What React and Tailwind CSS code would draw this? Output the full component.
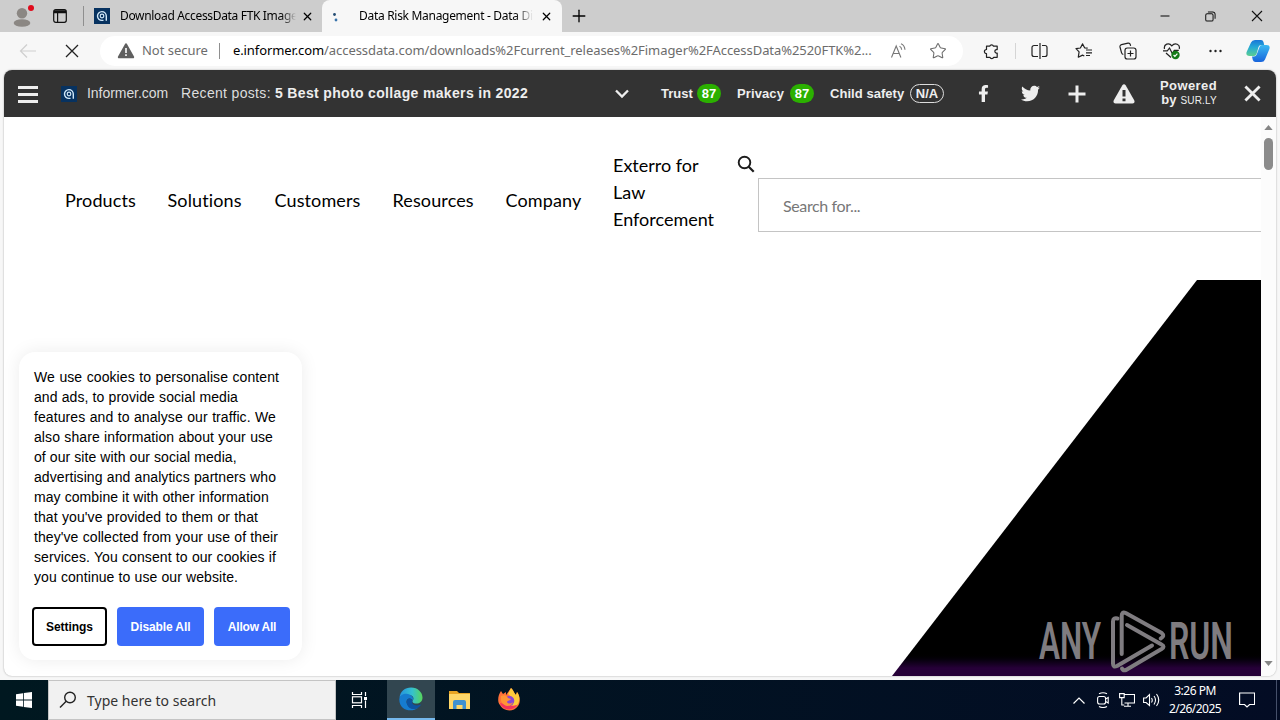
import { X, Plus, Minus, Star } from 'lucide-react';
import { FaFacebookF, FaTwitter } from 'react-icons/fa';

const menuItems = [
  { label: 'Products', width: 'w-[102.5px]' },
  { label: 'Solutions', width: 'w-[107px]' },
  { label: 'Customers', width: 'w-[118px]' },
  { label: 'Resources', width: 'w-[113px]' },
  { label: 'Company', width: 'w-[107.5px]' },
];

const cookieLines = [
  { text: 'We use cookies to personalise content', width: 245 },
  { text: 'and ads, to provide social media', width: 204 },
  { text: 'features and to analyse our traffic. We', width: 242 },
  { text: 'also share information about your use', width: 239 },
  { text: 'of our site with our social media,', width: 202 },
  { text: 'advertising and analytics partners who', width: 242 },
  { text: 'may combine it with other information', width: 233 },
  { text: "that you've provided to them or that", width: 224 },
  { text: "they've collected from your use of their", width: 244 },
  { text: 'services. You consent to our cookies if', width: 242 },
  { text: 'you continue to use our website.', width: 204 },
];

const InformerLogo = ({ className }) => (
  <svg viewBox="0 0 16 16" className={className} fill="none" stroke="#cfe6f7">
    <rect width="16" height="16" fill="#073260" stroke="none" />
    <path d="M12.300 12.800V8A4.400 4.400 0 1 0 8 12.400h1.500" strokeWidth="1.400" />
    <circle cx="8" cy="8" r="1.800" strokeWidth="1.200" />
  </svg>
);

const TabStrip = () => (
  <div className="flex h-8 items-center bg-[#cdcdcd] text-[12px] text-black">
    <svg viewBox="0 0 28 28" className="ml-2 h-7 w-7 shrink-0">
      <circle cx="14" cy="11.3" r="5.2" fill="#8b8783" />
      <ellipse cx="14" cy="21" rx="8.3" ry="3.8" fill="#8b8783" />
      <circle cx="23" cy="6" r="3" fill="#e00b1c" />
    </svg>
    <svg viewBox="0 0 14 14" className="ml-[17px] h-[14px] w-[14px] shrink-0" fill="none" stroke="#111" strokeWidth="1.2">
      <rect x="0.7" y="0.7" width="12.6" height="12.6" rx="2" />
      <path d="M1 2h12M1 3.6h12" strokeWidth="1.5" />
      <path d="M4.6 4v9" />
    </svg>
    <div className="ml-4 h-5 w-px bg-[#8f8f8f]" />
    <InformerLogo className="ml-[10px] h-4 w-4 shrink-0" />
    <div className="ml-[10px] w-[176px] whitespace-nowrap bg-linear-to-r from-black from-90% to-[#cdcdcd] bg-clip-text text-transparent tracking-[-0.33px]">
      Download AccessData FTK Image
    </div>
    <X className="ml-[5px] h-[13px] w-[13px] shrink-0" strokeWidth={2.2} />
    <div className="ml-2 flex h-8 w-[240px] shrink-0 items-center rounded-t-lg bg-[#f7f7f7]">
      <svg viewBox="0 0 16 16" className="ml-[7px] h-4 w-4 shrink-0">
        <circle cx="5.500" cy="6.500" r="1.400" fill="#234c72" />
        <circle cx="7" cy="12" r="1.400" fill="#3974ab" />
      </svg>
      <div className="ml-[14px] w-[174px] whitespace-nowrap bg-linear-to-r from-black from-88% to-[#f7f7f7] bg-clip-text text-transparent tracking-[-0.3px]">
        Data Risk Management - Data Di
      </div>
      <X className="ml-[7px] h-[13px] w-[13px] shrink-0" strokeWidth={2.2} />
    </div>
    <Plus className="ml-[7px] h-5 w-5" strokeWidth={1.6} />
    <div className="ml-auto flex items-center">
      <Minus className="h-[14px] w-[14px]" strokeWidth={1.7} />
      <svg viewBox="0 0 12 12" className="ml-[33px] h-[11px] w-[11px]" fill="none" stroke="#111" strokeWidth="1.1">
        <rect x="0.8" y="3" width="8" height="8" rx="1.5" />
        <path d="M3.2 1h5.3a2.5 2.5 0 0 1 2.5 2.5v5" />
      </svg>
      <svg viewBox="0 0 12 12" className="mr-[17px] ml-[35px] h-3 w-3" stroke="#111" strokeWidth="1.1">
        <path d="M1 1l10 10M11 1L1 11" />
      </svg>
    </div>
  </div>
);

const Toolbar = () => (
  <div className="flex h-[38px] items-center bg-[#f7f7f7]">
    <svg viewBox="0 0 18 16" className="ml-[19px] h-4 w-[18px] shrink-0" fill="none" stroke="#cfcfcf" strokeWidth="1.2">
      <path d="M17 8H1.5M8 1.5L1.5 8 8 14.5" />
    </svg>
    <svg viewBox="0 0 14 14" className="ml-7 h-[14px] w-[14px] shrink-0" stroke="#222" strokeWidth="1.3">
      <path d="M1 1l12 12M13 1L1 13" />
    </svg>
    <div className="ml-[21px] flex h-[30px] w-[863px] shrink-0 items-center rounded-full bg-white text-[13px] text-[#6c6c6c]">
      <svg viewBox="0 0 18 16" className="ml-[17px] h-4 w-[18px] shrink-0">
        <path d="M8 .9a1.1 1.1 0 0 1 2 0l7 12.7a1.1 1.1 0 0 1-1 1.7H2a1.1 1.1 0 0 1-1-1.7z" fill="#5f5f5f" />
        <path d="M9 5v5M9 11.3v1.7" stroke="#fff" strokeWidth="1.6" />
      </svg>
      <span className="ml-[7px] w-[66px] whitespace-nowrap tracking-[-0.02px]">Not secure</span>
      <div className="ml-[11px] h-4 w-px bg-[#8f8f8f]" />
      <span className="ml-[13px] w-[642px] whitespace-nowrap tracking-[-0.06px]">
        <span className="tracking-[-0.1px] text-black">e.informer.com</span>
        /accessdata.com/downloads%2Fcurrent_releases%2Fimager%2FAccessData%2520FTK%2...
      </span>
      <svg viewBox="0 0 18 16" className="ml-[15px] h-4 w-[18px] shrink-0" fill="none" stroke="#777" strokeWidth="1.1">
        <path d="M1.5 14.5L6.2 3l4.7 11.5M3 10.5h6.4" />
        <path d="M9.5 3.2q2 .8 2.2 3.6M11 .8q3.6 1.5 4 6" />
      </svg>
      <Star className="ml-[21px] h-[18px] w-[18px] shrink-0" strokeWidth={1.4} />
    </div>
    <svg viewBox="0 0 18 18" className="ml-[20px] h-[18px] w-[18px] shrink-0" fill="none" stroke="#222" strokeWidth="1.2" strokeLinejoin="round">
      <path d="M3.500 4.200h3.200a2 2 0 0 1 3.800 0h3.700v3.400h-1a1.800 1.800 0 0 0 0 3.500h1v4.200h-3.500a2 2 0 0 1-3.800 0H3.500v-3.600a2.100 2.100 0 0 1 0-4.200z" />
    </svg>
    <div className="ml-[14px] h-4 w-px bg-[#d5d5d5]" />
    <svg viewBox="0 0 18 16" className="ml-[15px] h-4 w-[18px] shrink-0" fill="none" stroke="#222" strokeWidth="1.2">
      <path d="M9 0v16M7 2.5H3a2 2 0 0 0-2 2v7a2 2 0 0 0 2 2h4M11 2.5h3a2 2 0 0 1 2 2v7a2 2 0 0 1-2 2h-3" />
    </svg>
    <svg viewBox="0 0 18 16" className="ml-[26px] h-4 w-[18px] shrink-0" fill="none" stroke="#222" strokeWidth="1.2" strokeLinejoin="round">
      <path d="M12.7 5.2L9.6 4.8 7.5 .9 5.4 5 1 5.7l3.1 3.2-.8 5.3 4.2-2.1 1.8.9M11 7h6M11 9.8h6M11 12.5h4" />
    </svg>
    <svg viewBox="0 0 18 18" className="ml-[26px] h-[18px] w-[18px] shrink-0" fill="none" stroke="#222" strokeWidth="1.2">
      <rect x="6" y="6" width="11" height="11" rx="2.3" />
      <path d="M11.5 8.5v6M8.5 11.5h6M4.3 12.5A2.5 2.5 0 0 1 2.5 10.700L1 5A2 2 0 0 1 2.500 2.600L9 1.200a2 2 0 0 1 2.300 1.500l.3 1.200" />
    </svg>
    <svg viewBox="0 0 18 18" className="ml-[26px] h-[18px] w-[18px] shrink-0" fill="none" stroke="#222" strokeWidth="1.2">
      <path d="M1.500 7C.4 2.200 6 0 8.800 3.800 12 0 17.500 2.300 16.200 7M3 11l5 4.500M0 8.800h4.300L6.500 6l2.800 5.500 2-3.200h4.500" />
      <circle cx="12.500" cy="13" r="4.200" fill="#137b18" stroke="none" />
      <path d="M10.600 13l1.300 1.400 2.500-2.800" stroke="#fff" />
    </svg>
    <svg viewBox="0 0 16 4" className="ml-[27px] h-1 w-4 shrink-0" fill="#222">
      <circle cx="2.500" cy="2" r="1.200" />
      <circle cx="7.500" cy="2" r="1.200" />
      <circle cx="12.500" cy="2" r="1.200" />
    </svg>
    <svg viewBox="0 0 24 24" className="ml-[22px] h-6 w-6 shrink-0">
      <defs>
        <linearGradient id="copilotLeft" x1="0" y1="0" x2="0" y2="1">
          <stop offset="0" stopColor="#1976d8" />
          <stop offset="0.450" stopColor="#24a9d6" />
          <stop offset="1" stopColor="#5ccf91" />
        </linearGradient>
        <linearGradient id="copilotRight" x1="0" y1="0" x2="0" y2="1">
          <stop offset="0" stopColor="#3ab9f2" />
          <stop offset="1" stopColor="#1864dc" />
        </linearGradient>
      </defs>
      <path d="M5 3.500Q6 1 9 1h6q2 0 2.500 2l.7 3h-3q-2 0-2.700 2L10.500 15q-.6 2-2.500 2H3.500q-4 0-2.900-4z" fill="url(#copilotLeft)" />
      <path d="M19 20.500Q18 23 15 23H9.500q-2 0-2.700-2L6 17.500h2q2 0 2.700-2L13.500 8q.6-2 2.500-2h4.500q4 0 2.900 4z" fill="url(#copilotRight)" />
    </svg>
  </div>
);

const Score = ({ value }) => (
  <span className="ml-[5px] flex h-[19px] w-6 items-center justify-center rounded-full bg-[#2bb000] text-white">{value}</span>
);

const SurlyBar = () => (
  <div className="flex h-[47px] shrink-0 items-center bg-[#333] font-['Liberation_Sans',sans-serif] text-[13px] font-bold text-[#eee]">
    <div className="mt-[2px] ml-[14px] flex w-5 shrink-0 flex-col gap-1">
      <div className="h-[3px] bg-[#eee]" />
      <div className="h-[3px] bg-[#eee]" />
      <div className="h-[3px] bg-[#eee]" />
    </div>
    <InformerLogo className="ml-[23px] h-4 w-4 shrink-0" />
    <span className="ml-[10px] w-[94px] whitespace-nowrap text-[14px] font-normal tracking-[-0.05px] text-[#ddd]">Informer.com</span>
    <span className="w-[94px] whitespace-nowrap text-[14px] font-normal tracking-[0.33px] text-[#ddd]">Recent posts:</span>
    <span className="whitespace-nowrap text-[14px] tracking-[0.34px]">5 Best photo collage makers in 2022</span>
    <div className="ml-auto flex items-center">
      <svg viewBox="0 0 14 10" className="h-[10px] w-[14px]" fill="none" stroke="#eee" strokeWidth="2.300">
        <path d="M1 1.500l6 6 6-6" />
      </svg>
      <span className="ml-[32px] w-[31px]">Trust</span>
      <Score value="87" />
      <span className="ml-4 w-12 tracking-[0.1px]">Privacy</span>
      <Score value="87" />
      <span className="ml-4 w-[75px] whitespace-nowrap tracking-[0.05px]">Child safety</span>
      <span className="ml-[5px] flex h-[19px] w-[34px] items-center justify-center rounded-full border border-[#ddd]">N/A</span>
      <FaFacebookF className="ml-[31px] h-[17px] w-[17px]" />
      <FaTwitter className="ml-[29px] h-[19px] w-[19px]" />
      <svg viewBox="0 0 18 18" className="ml-[28px] h-[18px] w-[18px]" stroke="#eee" strokeWidth="3">
        <path d="M9 .5v17M.5 9h17" />
      </svg>
      <svg viewBox="0 0 22 20" className="ml-[27px] h-5 w-[22px]">
        <path d="M9.200 1.400q1.800-2.200 3.600 0l8.400 14.800q1.200 3-1.700 3.300H2.500Q-.4 19.200.8 16.200z" fill="#eee" />
        <path d="M11 6v6.500M11 14.500v2.700" stroke="#333" strokeWidth="3" />
      </svg>
      <div className="ml-[25px] w-[57px] whitespace-nowrap text-right leading-[14px]">
        <div className="tracking-[0.4px]">Powered</div>
        <div className="flex items-baseline justify-end">
          by
          <span className="ml-1 text-[10px] font-normal tracking-[0.2px]">SUR.LY</span>
        </div>
      </div>
      <svg viewBox="0 0 18 18" className="mr-[15px] ml-[27px] h-[17px] w-[17px]" stroke="#eee" strokeWidth="3">
        <path d="M1.500 1.500l15 15M16.500 1.500l-15 15" />
      </svg>
    </div>
  </div>
);

const SiteHeader = () => (
  <div className="flex h-[163px] w-[1257px] shrink-0 overflow-hidden pl-[61px] font-['Lato',sans-serif] text-[18px] leading-[27px] text-black">
    {menuItems.map((item) => (
      <div key={item.label} className={`${item.width} shrink-0 pt-[70px] tracking-[0.12px]`}>{item.label}</div>
    ))}
    <div className="w-[124px] shrink-0 pt-[35px]">
      Exterro for
      <br />
      Law
      <br />
      Enforcement
    </div>
    <svg viewBox="0 0 18 18" className="mt-[38px] h-[18px] w-[18px] shrink-0" fill="none" stroke="#1c1c1c" strokeWidth="1.900">
      <circle cx="7.500" cy="7.500" r="5.800" />
      <path d="M11.700 11.700l5 5" strokeWidth="2.200" />
    </svg>
    <div className="mt-[61px] ml-[3px] flex h-[54px] w-[520px] shrink-0 items-center border border-[#c4c4c4] pl-6 text-[16px] tracking-[-0.38px] text-[#777]">
      Search for...
    </div>
  </div>
);

const CookieBanner = () => (
  <div className="absolute top-[235px] left-[15px] h-[308px] w-[283px] rounded-2xl bg-white px-[13px] pt-[15px] font-['Liberation_Sans',sans-serif] text-black shadow-[0_0_18px_rgba(0,0,0,0.08)]">
    <div className="pl-[2px] text-[14px] leading-5 tracking-[0.08px]">
      {cookieLines.map((line) => (
        <div key={line.text} className="h-5 text-justify whitespace-nowrap [text-align-last:justify]" style={{ width: line.width }}>
          {line.text}
        </div>
      ))}
    </div>
    <div className="mt-5 flex gap-[10px] text-[12px] font-bold text-white">
      <button className="h-[39px] w-[75px] shrink-0 rounded-[4px] border-2 border-black bg-white tracking-[-0.05px] text-black">Settings</button>
      <button className="h-[39px] w-[87px] shrink-0 rounded-[4px] bg-[#3b6cfa] tracking-[-0.1px]">Disable All</button>
      <button className="h-[39px] w-[76px] shrink-0 rounded-[4px] bg-[#3b6cfa] tracking-[-0.2px]">Allow All</button>
    </div>
  </div>
);

const Watermark = () => (
  <svg viewBox="0 0 204 72" className="absolute right-[34px] bottom-0 h-[72px] w-[204px]">
    <g fill="#7f7c80" fontFamily="Roboto, sans-serif" fontSize="52" fontWeight="600">
      <text x="1" y="55.200" textLength="62" lengthAdjust="spacingAndGlyphs">ANY</text>
      <text x="131" y="55.200" textLength="64" lengthAdjust="spacingAndGlyphs">RUN</text>
    </g>
    <g fill="none" stroke="#7f7c80" strokeWidth="4" strokeLinejoin="round" strokeLinecap="round">
      <path d="M79.500 14.500q-4.500-1-4.500 3v42q0 4.500 4 2.500l35-20.500" />
      <path d="M83.700 50V12q0-5 4-3l36 20q3.500 3-1 5.500" />
      <path d="M89 21l34.500 19.500q4 2 0 4.500L88 66q-3 1-4-1.500" />
    </g>
  </svg>
);

const Hero = () => (
  <div className="flex w-[1257px] flex-1 justify-end">
    <div className="h-[396px] w-[369px] bg-linear-to-b from-black from-94% to-[#260038] to-98% [clip-path:polygon(305px_0,100%_0,100%_100%,0_100%)]" />
  </div>
);

const Scrollbar = () => (
  <div className="flex w-[15px] shrink-0 flex-col items-center bg-[#fcfcfc] pt-2 pr-px pb-[10px]">
    <svg viewBox="0 0 10 6" className="h-[5px] w-[9px]"><path d="M0 6l5-6 5 6z" fill="#858585" /></svg>
    <div className="mt-[8px] h-8 w-[9px] rounded-full bg-[#8b8b8b]" />
    <svg viewBox="0 0 10 6" className="mt-auto h-[5px] w-[9px]"><path d="M0 0l5 6 5-6z" fill="#858585" /></svg>
  </div>
);

const EdgeIcon = () => (
  <svg viewBox="0 0 24 24" className="h-6 w-6">
    <defs>
      <linearGradient id="edgeTop" x1="0" y1="0" x2="1" y2="0">
        <stop offset="0" stopColor="#2492df" />
        <stop offset="0.550" stopColor="#35c1cf" />
        <stop offset="1" stopColor="#57d65b" />
      </linearGradient>
    </defs>
    <path d="M.5 11C1 4.500 6 .5 12 .5c7 0 11.500 5 11.500 10 0 4-3 6-6 6-4 0-5-2-3.500-3.500 1.500-2-.5-5-4-5-5 0-9 1-9.500 3z" fill="url(#edgeTop)" />
    <path d="M.3 12C1 7 7 6 10.500 7.500c3 1.300 4.500 4 3.300 5.800C10 9 6 13 8 17c2 4 6 6 11 4-7 5-19 2-18.700-9z" fill="#167ccf" />
    <path d="M8.500 12.500C6 17 10 23 16 22c3-.5 5-2.500 6.500-5-4 3-11 1-9-3-1.500-3-4-3-5-1.500z" fill="#0d53a1" />
  </svg>
);

const Taskbar = () => (
  <div className="flex h-10 items-center bg-linear-to-r from-[#001820] to-[#030c24] text-white">
    <svg viewBox="0 0 16 16" className="mx-4 h-4 w-4 shrink-0" fill="#fff">
      <path d="M0 2.200l7-1v6.300H0zM7.800 1.100L16 0v7.500H7.800zM0 8.400h7v6.400l-7-1zM7.800 8.400H16V16l-8.200-1.100z" />
    </svg>
    <div className="flex h-10 w-[288px] shrink-0 items-center border border-[#c4c4c4] bg-[#f1f1f1] text-[14px] text-[#333]">
      <svg viewBox="0 0 18 18" className="ml-[10px] h-[18px] w-[18px]" fill="none" stroke="#222" strokeWidth="1.400">
        <circle cx="11" cy="6.500" r="5.300" />
        <path d="M7.200 10.300L1 16.500" />
      </svg>
      <span className="ml-[10px] whitespace-nowrap tracking-[0.01px]">Type here to search</span>
    </div>
    <svg viewBox="0 0 18 16" className="ml-[15px] h-4 w-[18px] shrink-0" fill="none" stroke="#fff" strokeWidth="1.200">
      <path d="M1.500 0v2.500h9V0M1.500 16v-2.500h9V16M14.500 0v4M14.500 8.500V16" />
      <rect x="1.500" y="4.800" width="9" height="6" />
      <path d="M14.500 5v3" strokeWidth="3" />
    </svg>
    <div className="ml-[18px] flex h-10 w-12 shrink-0 items-center justify-center border-b-2 border-[#76b9ed] bg-[#324650]">
      <EdgeIcon />
    </div>
    <svg viewBox="0 0 22 20" className="ml-[14px] h-5 w-[22px] shrink-0">
      <path d="M0 1h8l2 2h11v4H0z" fill="#e9a523" />
      <path d="M0 4h21v15H0z" fill="#ffd768" />
      <path d="M4 19v-7q0-2 2-2h9q2 0 2 2v7h-3.500v-4h-6v4z" fill="#3f91d0" />
    </svg>
    <svg viewBox="0 0 24 24" className="ml-[26px] h-6 w-6 shrink-0">
      <path d="M4 3l2 3 3-2v3l5-7c3 3 3 5 5 7l1-3c3 4 4 10 1 14-5 7-15 5-18-1C0 14 1 7 4 3z" fill="#ff7139" />
      <path d="M14 0c3 3 3 5 5 7l1-3c3 4 3 8 1 12-3 3-7 3-9 0l5-5-6-5z" fill="#ffcb3b" />
      <path d="M3 15c2 7 13 9 17 2-3 1-5 1-7 0z" fill="#f4345d" />
      <circle cx="12.500" cy="12.800" r="4.800" fill="#8a45d6" />
      <path d="M4 8c4-2 6 0 7 2l3 1c-1 2-3 1-4 3 1 2 4 2 6 0-1 5-9 6-12-1z" fill="#ff9535" />
    </svg>
    <div className="ml-auto flex h-10 items-center">
      <svg viewBox="0 0 12 7" className="h-[7px] w-3" fill="none" stroke="#fff" strokeWidth="1.200"><path d="M.5 6.500L6 1l5.500 5.500" /></svg>
      <svg viewBox="0 0 12 16" className="ml-3 h-4 w-3" fill="none" stroke="#fff" strokeWidth="1.100">
        <rect x=".6" y="4.500" width="8" height="7.500" rx="2" />
        <path d="M8.600 7l2.600-1.500v5.500L8.600 9.500M2 1.700q4-2 8 0M2 14.500q4 2 8 0" />
      </svg>
      <svg viewBox="0 0 16 14" className="ml-[10px] h-[14px] w-4" fill="none" stroke="#fff" strokeWidth="1.100">
        <path d="M5.500 1.500h10v8.500h-10M5 13.300h7M9 10v3M.6 .6h4.600v4H.6zM2.800 4.600V12h2.500" />
      </svg>
      <svg viewBox="0 0 18 14" className="ml-2 h-[14px] w-[18px]" fill="none" stroke="#fff" strokeWidth="1.100">
        <path d="M.6 5h2.500L6.500 1.500v11L3.100 9.500H.6zM8.500 5q1.500 2.200 0 4.500M11 3q3 4 0 8.500M13.500 1q4.500 6 0 12" />
      </svg>
      <div className="ml-[7px] w-[54px] text-center text-[12px] leading-[18px] whitespace-nowrap">
        <div className="tracking-[-0.500px]">3:26 PM</div>
        <div className="tracking-[-0.550px]">2/26/2025</div>
      </div>
      <svg viewBox="0 0 16 16" className="ml-[17px] h-4 w-4" fill="none" stroke="#fff" strokeWidth="1.200">
        <path d="M.6 1h15v11.500h-5L8 15l-2.500-2.500H.6z" />
      </svg>
      <div className="mr-[3px] ml-[21px] h-10 w-px bg-[#45506a]" />
    </div>
  </div>
);

const App = () => {
  return (
    <div className="flex h-[720px] w-[1280px] flex-col overflow-hidden bg-[#f7f7f7] font-['Noto_Sans',sans-serif]">
      <TabStrip />
      <Toolbar />
      <div className="mx-1 mb-1 flex h-[606px] flex-col overflow-hidden rounded-lg bg-white shadow-[0_0_2px_rgba(0,0,0,0.35)]">
        <SurlyBar />
        <div className="relative flex flex-1">
          <div className="flex w-[1257px] shrink-0 flex-col">
            <SiteHeader />
            <Hero />
          </div>
          <Scrollbar />
          <CookieBanner />
          <Watermark />
        </div>
      </div>
      <Taskbar />
    </div>
  );
};

export default App;
